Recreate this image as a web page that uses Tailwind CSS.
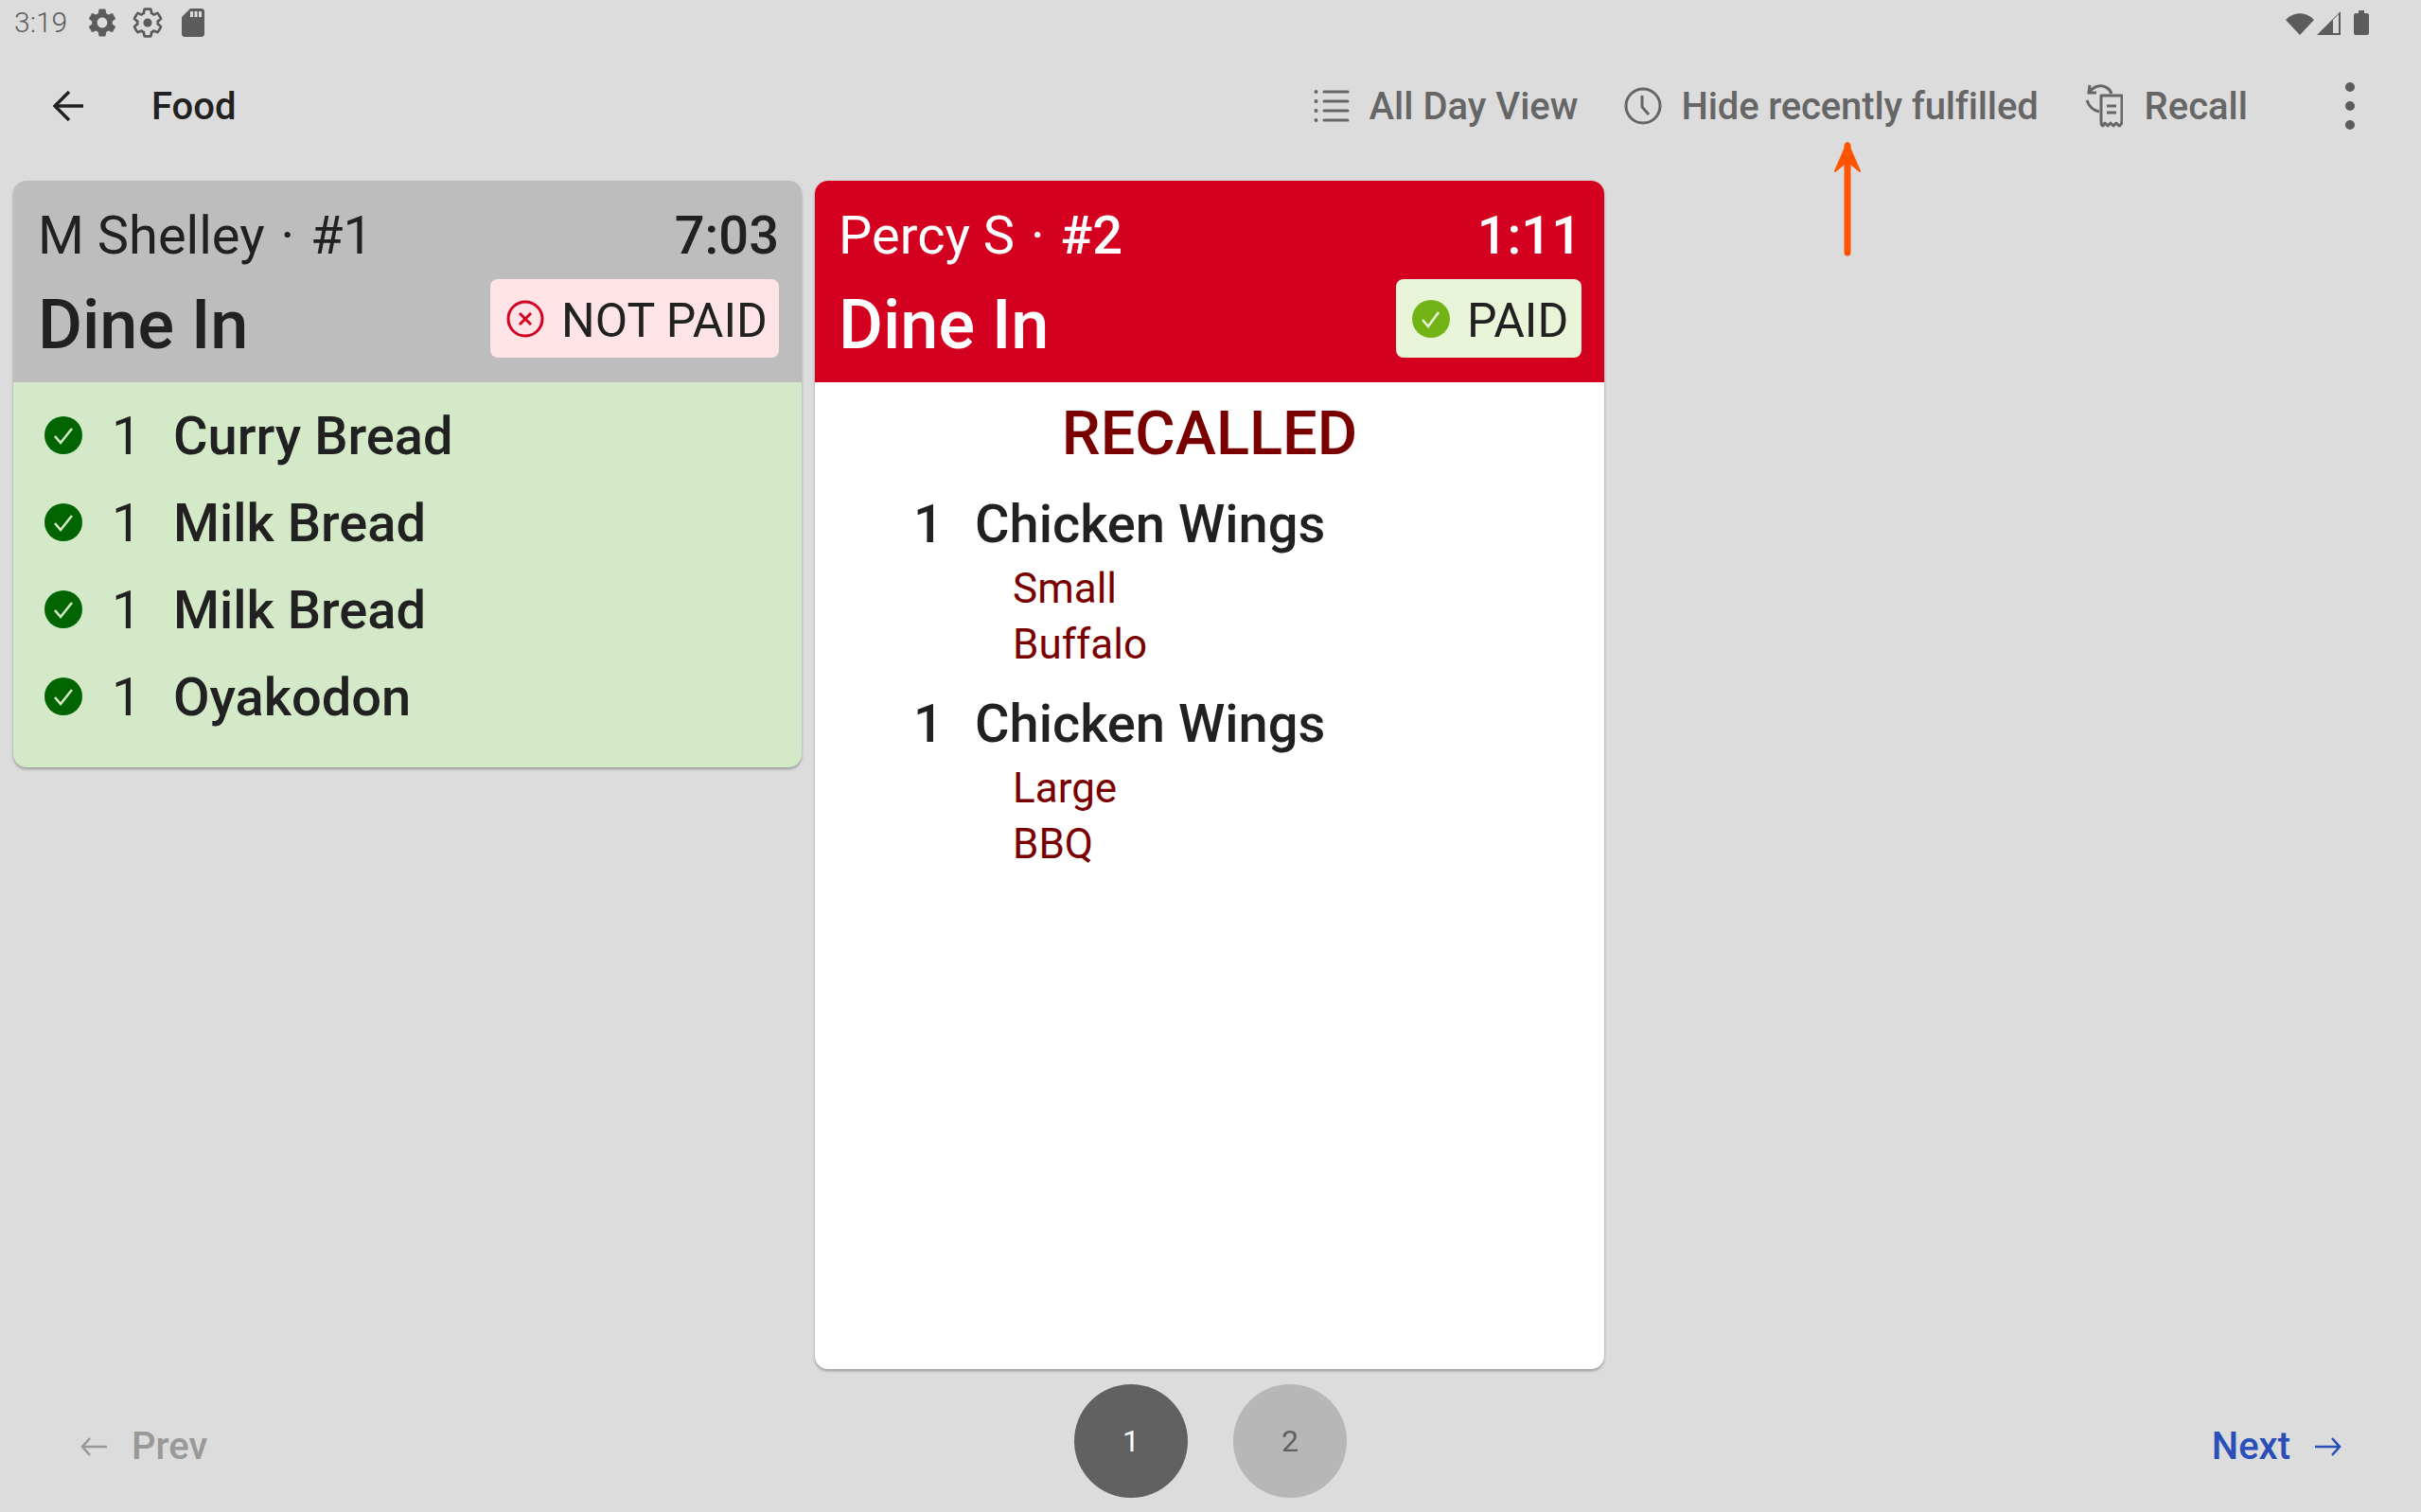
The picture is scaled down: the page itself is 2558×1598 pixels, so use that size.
<!DOCTYPE html>
<html>
<head>
<meta charset="utf-8">
<script src="https://cdn.jsdelivr.net/npm/@tailwindcss/browser@4"></script>
</head>
<body class="m-0 bg-[#dcdcdc] font-['Roboto',sans-serif]">
<div class="relative flex h-[1598px] w-[2558px] flex-col overflow-hidden bg-[#dcdcdc]">

  <!-- status bar -->
  <div class="flex h-[48px] shrink-0 items-center justify-between pl-[15px] pr-[55px] text-[#5c5c5c]">
    <div class="flex items-center">
      <span class="text-[30px] font-light leading-none">3:19</span>
      <svg class="ml-[19px] h-[36px] w-[36px]" viewBox="0 0 24 24" fill="#5c5c5c"><path d="M19.14 12.94c.04-.3.06-.61.06-.94 0-.32-.02-.64-.07-.94l2.03-1.58c.18-.14.23-.41.12-.61l-1.92-3.32c-.12-.22-.37-.29-.59-.22l-2.39.96c-.5-.38-1.03-.7-1.62-.94l-.36-2.54c-.04-.24-.24-.41-.48-.41h-3.84c-.24 0-.43.17-.47.41l-.36 2.54c-.59.24-1.13.57-1.62.94l-2.39-.96c-.22-.08-.47 0-.59.22L2.74 8.87c-.12.21-.08.47.12.61l2.03 1.58c-.05.3-.09.63-.09.94s.02.64.07.94l-2.03 1.58c-.18.14-.23.41-.12.61l1.92 3.32c.12.22.37.29.59.22l2.39-.96c.5.38 1.03.7 1.62.94l.36 2.54c.05.24.24.41.48.41h3.84c.24 0 .44-.17.47-.41l.36-2.54c.59-.24 1.13-.56 1.62-.94l2.39.96c.22.08.47 0 .59-.22l1.92-3.32c.12-.22.07-.47-.12-.61l-2.01-1.58zM12 15.6c-1.98 0-3.6-1.62-3.6-3.6s1.62-3.6 3.6-3.6 3.6 1.62 3.6 3.6-1.62 3.6-3.6 3.6z"/></svg>
      <svg class="ml-[12px] h-[36px] w-[36px]" viewBox="0 0 24 24" fill="none" stroke="#5c5c5c" stroke-width="1.8"><path d="M19.14 12.94c.04-.3.06-.61.06-.94 0-.32-.02-.64-.07-.94l2.03-1.58c.18-.14.23-.41.12-.61l-1.92-3.32c-.12-.22-.37-.29-.59-.22l-2.39.96c-.5-.38-1.03-.7-1.62-.94l-.36-2.54c-.04-.24-.24-.41-.48-.41h-3.84c-.24 0-.43.17-.47.41l-.36 2.54c-.59.24-1.13.57-1.62.94l-2.39-.96c-.22-.08-.47 0-.59.22L2.74 8.87c-.12.21-.08.47.12.61l2.03 1.58c-.05.3-.09.63-.09.94s.02.64.07.94l-2.03 1.58c-.18.14-.23.41-.12.61l1.92 3.32c.12.22.37.29.59.22l2.39-.96c.5.38 1.03.7 1.62.94l.36 2.54c.05.24.24.41.48.41h3.84c.24 0 .44-.17.47-.41l.36-2.54c.59-.24 1.13-.56 1.62-.94l2.39.96c.22.08.47 0 .59-.22l1.92-3.32c.12-.22.07-.47-.12-.61l-2.01-1.58z"/><circle cx="12" cy="12" r="3" fill="#5c5c5c" stroke="none"/></svg>
      <svg class="ml-[12px] h-[36px] w-[36px]" viewBox="0 0 24 24" fill="#5c5c5c"><path d="M18 2h-8L4.02 8 4 20c0 1.1.9 2 2 2h12c1.1 0 2-.9 2-2V4c0-1.1-.9-2-2-2zm-6 6h-2V4h2v4zm3 0h-2V4h2v4zm3 0h-2V4h2v4z"/></svg>
    </div>
    <div class="flex items-center gap-[3px]">
      <svg class="h-[25px] w-[30px]" viewBox="0 0 30 25" fill="#5c5c5c"><path d="M0 9C8 0 22 0 30 9L15 25Z"/></svg>
      <svg class="h-[25px] w-[25px]" viewBox="0 0 25 25" fill="#5c5c5c"><path fill-rule="evenodd" d="M25 0V25H0ZM17 9V23H23V3Z"/></svg>
      <svg class="ml-[11px] h-[26px] w-[16px]" viewBox="0 0 16 26" fill="#5c5c5c"><path d="M5 0h6v3h3c1 0 2 1 2 2v19c0 1-1 2-2 2H2c-1 0-2-1-2-2V5c0-1 1-2 2-2h3Z"/></svg>
    </div>
  </div>

  <!-- toolbar -->
  <div class="flex h-[143px] shrink-0 items-center pb-[16px] pl-[56px] text-[40px] font-medium leading-none">
    <svg class="h-[32px] w-[32px]" viewBox="0 0 32 32" fill="none" stroke="#212121" stroke-width="3.4"><path d="M32 16H2M17 1 2 16l15 15"/></svg>
    <span class="ml-[72px] pt-[3px] text-[#212121]">Food</span>
    <div class="ml-auto flex items-center text-[#666]">
      <svg class="h-[36px] w-[38px]" viewBox="0 0 38 36" fill="none" stroke="#666" stroke-width="3" stroke-linecap="round"><path d="M11 3H36M11 13H36M11 23H36M11 33H36"/><circle cx="2.500" cy="3" r="1" stroke-width="2"/><circle cx="2.500" cy="13" r="1" stroke-width="2"/><circle cx="2.500" cy="23" r="1" stroke-width="2"/><circle cx="2.500" cy="33" r="1" stroke-width="2"/></svg>
      <span class="ml-[21px] pt-[3px]">All Day View</span>
      <svg class="ml-[49px] h-[40px] w-[40px]" viewBox="0 0 40 40" fill="none" stroke="#666" stroke-width="3"><circle cx="20" cy="20" r="18"/><path d="M19 9V21L26 29"/></svg>
      <span class="ml-[20px] pt-[3px] tracking-[-0.15px]">Hide recently fulfilled</span>
      <svg class="ml-[49px] h-[46px] w-[40px]" viewBox="0 0 40 46" fill="none" stroke="#666" stroke-width="3"><path d="M17 12H39V39C39 42 37 44 36 44L33 41 30 44 27 41 24 44 21 41 19 44C18 44 17 42 17 39Z" stroke-linejoin="round"/><path d="M23 23H33M23 30H33"/><path d="M28 10C26 4 20 1 14 2 10 3 7 5 5 8"/><path d="M2 17C4 23 9 28 15 29"/><path d="M5 1 4 9 12 9"/></svg>
      <span class="ml-[23px] pt-[3px]">Recall</span>
      <div class="ml-[103px] mr-[70px] flex flex-col gap-[10px]">
        <span class="h-[10px] w-[10px] rounded-full bg-[#5c5c5c]"></span>
        <span class="h-[10px] w-[10px] rounded-full bg-[#5c5c5c]"></span>
        <span class="h-[10px] w-[10px] rounded-full bg-[#5c5c5c]"></span>
      </div>
    </div>
  </div>

  <!-- cards -->
  <div class="flex h-[1256px] shrink-0 items-start gap-[14px] pl-[14px] text-[#212121]">
    <!-- card 1 -->
    <div class="w-[833px] overflow-hidden rounded-[14px] bg-[#d3e9c7] shadow-[0_2px_3px_rgba(0,0,0,0.3)]">
      <div class="h-[213px] bg-[#bdbdbd] pl-[26px] pr-[24px] pt-[25px]">
        <div class="flex items-center justify-between text-[56px] leading-[66px]">
          <span>M Shelley <span class="mx-[3px]">·</span> #1</span><span class="font-medium">7:03</span>
        </div>
        <div class="flex items-start justify-between">
          <span class="mt-[20px] text-[72px] font-medium leading-[84px]">Dine In</span>
          <div class="mt-[13px] flex h-[83px] w-[305px] items-center rounded-[8px] bg-[#ffe4e7] pl-[17px]">
            <svg class="h-[40px] w-[40px]" viewBox="0 0 40 40" fill="none" stroke="#d50020" stroke-width="3"><circle cx="20" cy="20" r="18"/><path d="M14 14 26 26M26 14 14 26"/></svg>
            <span class="ml-[18px] mt-[5px] text-[50px] leading-none">NOT PAID</span>
          </div>
        </div>
      </div>
      <div class="flex h-[407px] flex-col pl-[33px] pt-[11px] text-[56px] font-medium leading-[92px]">
        <div class="flex h-[92px] items-center"><svg class="-mt-[2px] h-[40px] w-[40px]" viewBox="0 0 40 40"><circle cx="20" cy="20" r="20" fill="#006400"/><path d="M11 21 17 28 29 13" fill="none" stroke="#d3e9c7" stroke-width="2.6"/></svg><span class="ml-[31px] w-[65px] font-normal">1</span><span>Curry Bread</span></div>
        <div class="flex h-[92px] items-center"><svg class="-mt-[2px] h-[40px] w-[40px]" viewBox="0 0 40 40"><circle cx="20" cy="20" r="20" fill="#006400"/><path d="M11 21 17 28 29 13" fill="none" stroke="#d3e9c7" stroke-width="2.6"/></svg><span class="ml-[31px] w-[65px] font-normal">1</span><span>Milk Bread</span></div>
        <div class="flex h-[92px] items-center"><svg class="-mt-[2px] h-[40px] w-[40px]" viewBox="0 0 40 40"><circle cx="20" cy="20" r="20" fill="#006400"/><path d="M11 21 17 28 29 13" fill="none" stroke="#d3e9c7" stroke-width="2.6"/></svg><span class="ml-[31px] w-[65px] font-normal">1</span><span>Milk Bread</span></div>
        <div class="flex h-[92px] items-center"><svg class="-mt-[2px] h-[40px] w-[40px]" viewBox="0 0 40 40"><circle cx="20" cy="20" r="20" fill="#006400"/><path d="M11 21 17 28 29 13" fill="none" stroke="#d3e9c7" stroke-width="2.6"/></svg><span class="ml-[31px] w-[65px] font-normal">1</span><span>Oyakodon</span></div>
      </div>
    </div>
    <!-- card 2 -->
    <div class="h-[1256px] w-[834px] overflow-hidden rounded-[14px] bg-white shadow-[0_2px_3px_rgba(0,0,0,0.3)]">
      <div class="h-[213px] bg-[#d30020] pl-[25px] pr-[24px] pt-[25px] text-white">
        <div class="flex items-center justify-between text-[56px] leading-[66px]">
          <span>Percy S <span class="mx-[3px]">·</span> <span class="font-medium">#2</span></span><span class="font-medium">1:11</span>
        </div>
        <div class="flex items-start justify-between">
          <span class="mt-[20px] text-[72px] font-medium leading-[84px]">Dine In</span>
          <div class="mt-[13px] flex h-[83px] w-[196px] items-center rounded-[8px] bg-[#e9f5d8] pl-[17px] text-[#212121]">
            <svg class="h-[40px] w-[40px]" viewBox="0 0 40 40"><circle cx="20" cy="20" r="20" fill="#72b416"/><path d="M11 21 17 28 28 13" fill="none" stroke="#e9f5d8" stroke-width="2.6"/></svg>
            <span class="ml-[18px] mt-[5px] text-[50px] leading-none">PAID</span>
          </div>
        </div>
      </div>
      <div class="flex flex-col pt-[16px]">
        <div class="text-center text-[65px] font-medium leading-[76px] text-[#7a0000]">RECALLED</div>
        <div class="mt-[25px] flex pl-[104px] text-[56px] font-medium leading-[66px]"><span class="w-[65px]">1</span><span>Chicken Wings</span></div>
        <div class="mt-[6px] pl-[209px] text-[44px] leading-[59px] text-[#7a0000]"><div>Small</div><div>Buffalo</div></div>
        <div class="mt-[21px] flex pl-[104px] text-[56px] font-medium leading-[66px]"><span class="w-[65px]">1</span><span>Chicken Wings</span></div>
        <div class="mt-[6px] pl-[209px] text-[44px] leading-[59px] text-[#7a0000]"><div>Large</div><div>BBQ</div></div>
      </div>
    </div>
  </div>

  <!-- bottom bar -->
  <div class="relative flex flex-1 items-center justify-between pl-[85px] pr-[84px]">
    <div class="mt-[12px] flex items-center text-[40px] font-medium leading-none text-[#999]">
    <svg class="h-[20px] w-[28px]" viewBox="0 0 28 20" fill="none" stroke="#999" stroke-width="2.6"><path d="M28 10H2M10 1 2 10l8 9"/></svg>
    <span class="ml-[26px]">Prev</span></div>
    <div class="absolute left-[1135px] top-[16px] flex gap-[48px] text-[32px] leading-none">
      <div class="flex h-[120px] w-[120px] items-center justify-center rounded-full bg-[#616161] text-white">1</div>
      <div class="flex h-[120px] w-[120px] items-center justify-center rounded-full bg-[#b7b7b7] text-[#616161]">2</div>
    </div>
    <div class="mt-[12px] flex items-center text-[40px] font-medium leading-none text-[#2a4fb8]">
    <span>Next</span>
    <svg class="ml-[26px] h-[20px] w-[28px]" viewBox="0 0 28 20" fill="none" stroke="#2a4fb8" stroke-width="2.6"><path d="M0 10H26M18 1l8 9-8 9"/></svg></div>
  </div>

  <!-- annotation arrow -->
  <svg class="absolute left-[1936px] top-[148px] h-[124px] w-[32px]" viewBox="0 0 32 124" fill="none"><path d="M16 6V119" stroke="#ff5500" stroke-width="7" stroke-linecap="round"/><path d="M16 3 3 33 16 22 29 33Z" fill="#ff5500" stroke="#ff5500" stroke-width="2" stroke-linejoin="round"/></svg>
</div>
</body>
</html>
